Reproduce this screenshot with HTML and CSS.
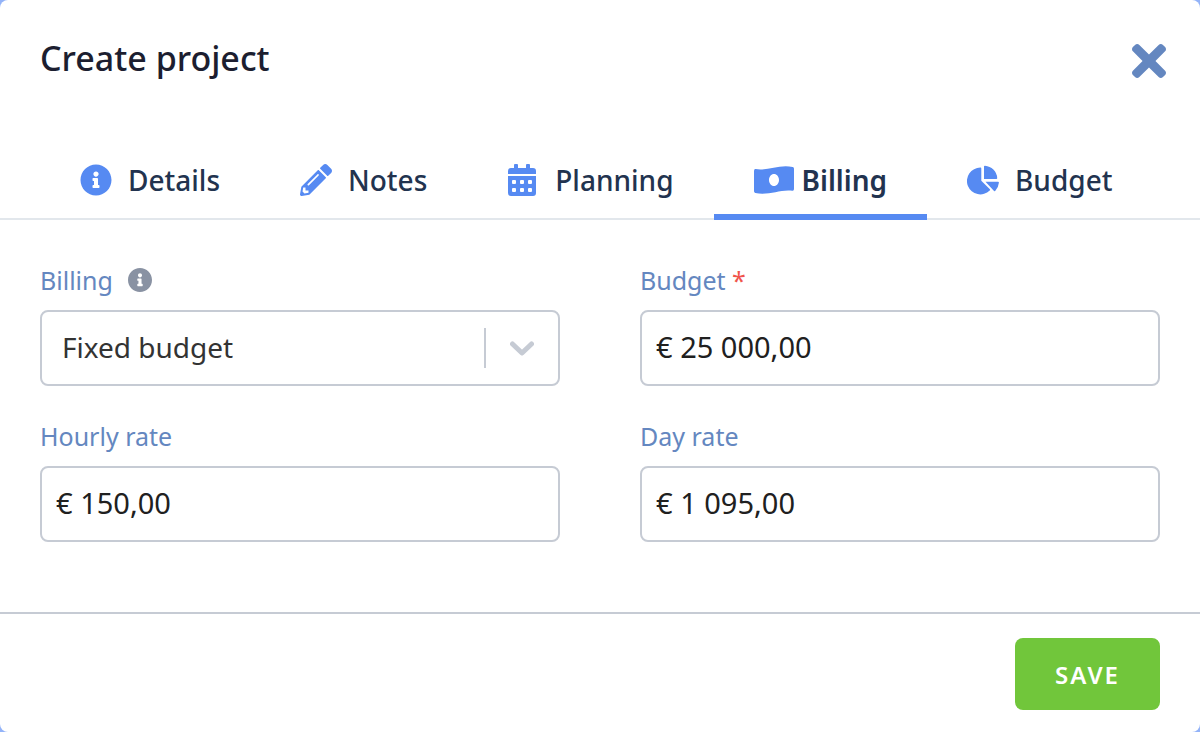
FILE: index.html
```
<!DOCTYPE html>
<html lang="en">
<head>
    <meta charset="UTF-8">
    <meta name="viewport" content="width=device-width, initial-scale=1.0">
    <title>Create project</title>
    <link rel="stylesheet" href="styles.css">
</head>
<body>
    <form class="modal">
        <header class="modal-header">
            <h1>Create project</h1>
            <button type="button" class="close-btn" aria-label="Close">
                <svg width="34" height="34" viewBox="0 80 352 352"><path d="M242.72 256l100.07-100.07c12.28-12.28 12.28-32.19 0-44.48l-22.24-22.24c-12.28-12.28-32.19-12.28-44.48 0L176 189.28 75.93 89.21c-12.28-12.28-32.19-12.28-44.48 0L9.21 111.45c-12.28 12.28-12.28 32.19 0 44.48L109.28 256 9.21 356.07c-12.28 12.28-12.28 32.19 0 44.48l22.24 22.24c12.28 12.28 32.2 12.28 44.48 0L176 322.72l100.07 100.07c12.28 12.28 32.2 12.28 44.48 0l22.24-22.24c12.28-12.28 12.28-32.19 0-44.48L242.72 256z"/></svg>
            </button>
        </header>

        <!-- Tabs -->
        <nav class="tabs" role="tablist">
            <button type="button" class="tab" role="tab">
                <span class="tab-icon"><svg width="32" height="32" viewBox="0 0 512 512"><path d="M256 8C119.043 8 8 119.083 8 256c0 136.997 111.043 248 248 248s248-111.003 248-248C504 119.083 392.957 8 256 8zm0 110c23.196 0 42 18.804 42 42s-18.804 42-42 42-42-18.804-42-42 18.804-42 42-42zm56 254c0 6.627-5.373 12-12 12h-88c-6.627 0-12-5.373-12-12v-24c0-6.627 5.373-12 12-12h12v-64h-12c-6.627 0-12-5.373-12-12v-24c0-6.627 5.373-12 12-12h64c6.627 0 12 5.373 12 12v100h12c6.627 0 12 5.373 12 12v24z"/></svg></span>
                Details
            </button>
            <button type="button" class="tab" role="tab">
                <span class="tab-icon"><svg width="32" height="32" viewBox="0 0 512 512"><path d="M497.900 142.100l-46.100 46.100c-4.700 4.700-12.300 4.700-17 0l-111-111c-4.700-4.700-4.700-12.300 0-17l46.100-46.100c18.700-18.700 49.100-18.700 67.900 0l60.100 60.100c18.800 18.700 18.800 49.100 0 67.900zM284.200 99.800L21.600 362.400.4 483.900c-2.900 16.400 11.400 30.600 27.800 27.800l121.500-21.300 262.600-262.600c4.700-4.700 4.700-12.300 0-17l-111-111c-4.800-4.700-12.400-4.700-17.100 0zM124.100 339.900c-5.500-5.500-5.500-14.300 0-19.800l154-154c5.500-5.500 14.300-5.500 19.800 0s5.500 14.300 0 19.800l-154 154c-5.500 5.500-14.300 5.500-19.800 0zM88 424h48v36.300l-64.500 11.300-31.100-31.100L51.700 376H88v48z"/></svg></span>
                Notes
            </button>
            <button type="button" class="tab" role="tab">
                <span class="tab-icon"><svg width="32" height="32" viewBox="0 0 32 32"><path fill-rule="evenodd" d="M1 10V7a3 3 0 0 1 3-3h3V1a1 1 0 0 1 1-1h2a1 1 0 0 1 1 1v3h8V1a1 1 0 0 1 1-1h2a1 1 0 0 1 1 1v3h3a3 3 0 0 1 3 3v3zM1 12h28v17a3 3 0 0 1-3 3H4a3 3 0 0 1-3-3zM6 16a1 1 0 0 0-1 1v2a1 1 0 0 0 1 1h2a1 1 0 0 0 1-1v-2a1 1 0 0 0-1-1zm8 0a1 1 0 0 0-1 1v2a1 1 0 0 0 1 1h2a1 1 0 0 0 1-1v-2a1 1 0 0 0-1-1zm8 0a1 1 0 0 0-1 1v2a1 1 0 0 0 1 1h2a1 1 0 0 0 1-1v-2a1 1 0 0 0-1-1zM6 24a1 1 0 0 0-1 1v2a1 1 0 0 0 1 1h2a1 1 0 0 0 1-1v-2a1 1 0 0 0-1-1zm8 0a1 1 0 0 0-1 1v2a1 1 0 0 0 1 1h2a1 1 0 0 0 1-1v-2a1 1 0 0 0-1-1zm8 0a1 1 0 0 0-1 1v2a1 1 0 0 0 1 1h2a1 1 0 0 0 1-1v-2a1 1 0 0 0-1-1z"/></svg></span>
                Planning
            </button>
            <button type="button" class="tab active" role="tab" aria-selected="true">
                <span class="tab-icon"><svg width="40" height="32" viewBox="0 0 40 32"><path fill-rule="evenodd" d="M1.700 5.100C14 7 25 .2 38.700 3Q40 3.400 40 4.700V25Q40 27 38.300 26.700C26 25 15 31.800 1.300 29Q0 28.600 0 27.300V7Q0 4.800 1.700 5.100zM20 10c-2.800 0-5 2.700-5 6s2.200 6 5 6 5-2.700 5-6-2.200-6-5-6z"/></svg></span>
                Billing
            </button>
            <button type="button" class="tab" role="tab">
                <span class="tab-icon"><svg width="32" height="32" viewBox="0 0 32 32"><path d="M14.300 4.500V16.700L22.900 25.200Q23.500 25.900 22.700 26.600A13.400 13.400 0 1 1 13.400 3.600Q14.300 3.500 14.300 4.500zM17 2.500Q17 1.600 18 1.700A13.300 13.300 0 0 1 30.200 14Q30.300 15 29.400 15H17zM18.500 17.800H31Q32 17.800 31.900 18.700A14 14 0 0 1 28.200 26.900Q27.500 27.600 26.800 26.800z"/></svg></span>
                Budget
            </button>
        </nav>

        <!-- Billing fields -->
        <div class="fields">
            <div class="field">
                <div class="label-row">
                    <label for="billing">Billing</label>
                    <svg class="hint" width="24" height="24" viewBox="8 8 496 496"><path d="M256 8C119.043 8 8 119.083 8 256c0 136.997 111.043 248 248 248s248-111.003 248-248C504 119.083 392.957 8 256 8zm0 110c23.196 0 42 18.804 42 42s-18.804 42-42 42-42-18.804-42-42 18.804-42 42-42zm56 254c0 6.627-5.373 12-12 12h-88c-6.627 0-12-5.373-12-12v-24c0-6.627 5.373-12 12-12h12v-64h-12c-6.627 0-12-5.373-12-12v-24c0-6.627 5.373-12 12-12h64c6.627 0 12 5.373 12 12v100h12c6.627 0 12 5.373 12 12v24z"/></svg>
                </div>
                <div class="select-wrap">
                    <select id="billing" class="control">
                        <option>Fixed budget</option>
                    </select>
                    <span class="select-arrow">
                        <svg width="24" height="16" viewBox="0 0 24 16"><path d="M2.500 4L12 13L21.500 4" fill="none" stroke="currentColor" stroke-width="5" stroke-linecap="round" stroke-linejoin="round"/></svg>
                    </span>
                </div>
            </div>
            <div class="field">
                <div class="label-row">
                    <label for="budget">Budget <span class="required">*</span></label>
                </div>
                <input type="text" id="budget" class="control" value="€ 25 000,00">
            </div>
            <div class="field">
                <div class="label-row">
                    <label for="hourly">Hourly rate</label>
                </div>
                <input type="text" id="hourly" class="control" value="€ 150,00">
            </div>
            <div class="field">
                <div class="label-row">
                    <label for="day">Day rate</label>
                </div>
                <input type="text" id="day" class="control" value="€ 1 095,00">
            </div>
        </div>

        <footer class="modal-footer">
            <button type="submit" class="save-btn">SAVE</button>
        </footer>
    </form>
</body>
</html>
```
FILE: styles.css
```
* {
    margin: 0;
    padding: 0;
    box-sizing: border-box;
}

body {
    font-family: "Noto Sans", sans-serif;
    background-color: #93b3f8;
}

button,
input,
select {
    font-family: inherit;
}

svg {
    display: block;
    fill: currentColor;
}

.modal {
    display: flex;
    flex-direction: column;
    min-height: 100vh;
    background-color: #fff;
    border-radius: 8px;
}

/* Header */
.modal-header {
    display: flex;
    justify-content: space-between;
    align-items: flex-start;
    padding: 32px 34px 32px 40px;
}

h1 {
    font-size: 34px;
    font-weight: 500;
    line-height: 52px;
    color: #1c1e30;
}

.close-btn {
    padding-top: 12px;
    border: none;
    background: none;
    color: #6487c0;
    cursor: pointer;
}

/* Tabs */
.tabs {
    display: flex;
    padding: 0 40px;
    box-shadow: inset 0 -2px #e2e7ec;
}

.tab {
    display: flex;
    align-items: center;
    height: 104px;
    padding: 30px 40px 0;
    border: none;
    border-bottom: 6px solid transparent;
    background: none;
    font-size: 28px;
    font-weight: 500;
    line-height: 48px;
    color: #22334f;
    cursor: pointer;
}

.tab.active {
    border-bottom-color: #568af2;
    font-weight: 600;
}

.tab-icon {
    width: 48px;
    color: #568af2;
}

/* Fields */
.fields {
    display: grid;
    grid-template-columns: 1fr 1fr;
    gap: 30px 80px;
    padding: 40px 40px 70px;
}

.label-row {
    display: flex;
    align-items: center;
    gap: 15px;
    height: 40px;
    margin-bottom: 10px;
    font-size: 25px;
    color: #6487c0;
}

.hint {
    color: #8992a3;
}

.required {
    color: #f0544c;
}

.control {
    display: block;
    width: 100%;
    height: 76px;
    padding: 0 14px 3px;
    border: 2px solid #c6cbd4;
    border-radius: 8px;
    background-color: #fff;
    font-size: 29px;
    color: #202020;
    outline: none;
}

.select-wrap {
    position: relative;
}

select.control {
    appearance: none;
    padding: 0 76px 3px 20px;
    font-size: 28px;
    color: #333;
}

.control:focus {
    border-color: #568af2;
}

.select-arrow {
    position: absolute;
    top: 18px;
    right: 2px;
    display: flex;
    align-items: center;
    justify-content: center;
    width: 74px;
    height: 40px;
    border-left: 2px solid #c6cbd4;
    color: #c6cbd4;
    pointer-events: none;
}

/* Footer */
.modal-footer {
    display: flex;
    flex: 1;
    justify-content: flex-end;
    align-items: flex-start;
    padding: 24px 40px 22px;
    border-top: 2px solid #c6cbd4;
}

.save-btn {
    height: 72px;
    padding: 0 40px;
    border: none;
    border-radius: 8px;
    background-color: #71c63b;
    color: #fff;
    font-size: 24px;
    font-weight: 600;
    letter-spacing: 2px;
    cursor: pointer;
}

.save-btn:hover {
    background-color: #65b633;
}
```
